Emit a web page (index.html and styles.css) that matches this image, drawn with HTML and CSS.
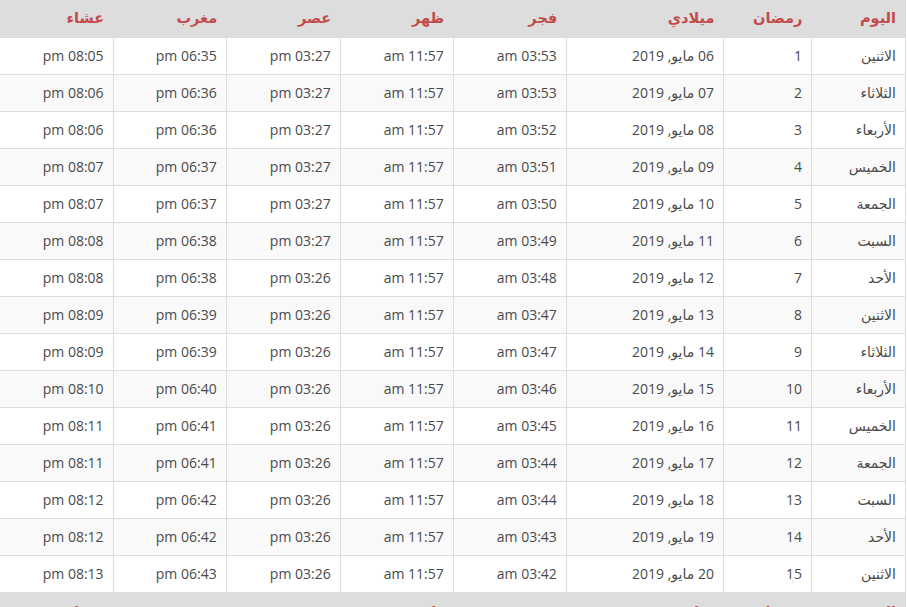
FILE: index.html
```html
<!DOCTYPE html>
<html lang="ar">
<head>
<meta charset="utf-8">
<title>إمساكية رمضان</title>
<link rel="stylesheet" href="styles.css">
</head>
<body>
<table class="times" dir="rtl">
<colgroup>
<col class="c-day"><col class="c-ram"><col class="c-date"><col class="c-t"><col class="c-t"><col class="c-t3"><col class="c-t"><col class="c-t">
</colgroup>
<thead>
<tr><th>اليوم</th><th>رمضان</th><th>ميلادي</th><th>فجر</th><th>ظهر</th><th>عصر</th><th>مغرب</th><th>عشاء</th></tr>
</thead>
<tbody>
<tr><td>الاثنين</td><td>1</td><td>06 مايو, 2019</td><td>03:53 am</td><td>11:57 am</td><td>03:27 pm</td><td>06:35 pm</td><td>08:05 pm</td></tr>
<tr><td>الثلاثاء</td><td>2</td><td>07 مايو, 2019</td><td>03:53 am</td><td>11:57 am</td><td>03:27 pm</td><td>06:36 pm</td><td>08:06 pm</td></tr>
<tr><td>الأربعاء</td><td>3</td><td>08 مايو, 2019</td><td>03:52 am</td><td>11:57 am</td><td>03:27 pm</td><td>06:36 pm</td><td>08:06 pm</td></tr>
<tr><td>الخميس</td><td>4</td><td>09 مايو, 2019</td><td>03:51 am</td><td>11:57 am</td><td>03:27 pm</td><td>06:37 pm</td><td>08:07 pm</td></tr>
<tr><td>الجمعة</td><td>5</td><td>10 مايو, 2019</td><td>03:50 am</td><td>11:57 am</td><td>03:27 pm</td><td>06:37 pm</td><td>08:07 pm</td></tr>
<tr><td>السبت</td><td>6</td><td>11 مايو, 2019</td><td>03:49 am</td><td>11:57 am</td><td>03:27 pm</td><td>06:38 pm</td><td>08:08 pm</td></tr>
<tr><td>الأحد</td><td>7</td><td>12 مايو, 2019</td><td>03:48 am</td><td>11:57 am</td><td>03:26 pm</td><td>06:38 pm</td><td>08:08 pm</td></tr>
<tr><td>الاثنين</td><td>8</td><td>13 مايو, 2019</td><td>03:47 am</td><td>11:57 am</td><td>03:26 pm</td><td>06:39 pm</td><td>08:09 pm</td></tr>
<tr><td>الثلاثاء</td><td>9</td><td>14 مايو, 2019</td><td>03:47 am</td><td>11:57 am</td><td>03:26 pm</td><td>06:39 pm</td><td>08:09 pm</td></tr>
<tr><td>الأربعاء</td><td>10</td><td>15 مايو, 2019</td><td>03:46 am</td><td>11:57 am</td><td>03:26 pm</td><td>06:40 pm</td><td>08:10 pm</td></tr>
<tr><td>الخميس</td><td>11</td><td>16 مايو, 2019</td><td>03:45 am</td><td>11:57 am</td><td>03:26 pm</td><td>06:41 pm</td><td>08:11 pm</td></tr>
<tr><td>الجمعة</td><td>12</td><td>17 مايو, 2019</td><td>03:44 am</td><td>11:57 am</td><td>03:26 pm</td><td>06:41 pm</td><td>08:11 pm</td></tr>
<tr><td>السبت</td><td>13</td><td>18 مايو, 2019</td><td>03:44 am</td><td>11:57 am</td><td>03:26 pm</td><td>06:42 pm</td><td>08:12 pm</td></tr>
<tr><td>الأحد</td><td>14</td><td>19 مايو, 2019</td><td>03:43 am</td><td>11:57 am</td><td>03:26 pm</td><td>06:42 pm</td><td>08:12 pm</td></tr>
<tr><td>الاثنين</td><td>15</td><td>20 مايو, 2019</td><td>03:42 am</td><td>11:57 am</td><td>03:26 pm</td><td>06:43 pm</td><td>08:13 pm</td></tr>
</tbody>
<tfoot>
<tr><th>اليوم</th><th>رمضان</th><th>ميلادي</th><th>فجر</th><th>ظهر</th><th>عصر</th><th>مغرب</th><th>عشاء</th></tr>
</tfoot>
</table>
</body>
</html>
```
FILE: styles.css
```css
html, body {
  margin: 0;
  padding: 0;
  background: #fff;
}
body {
  font-family: "Open Sans", "DejaVu Sans", sans-serif;
  font-size: 14px;
  color: #4a4a4a;
}
.times {
  width: 906px;
  border-collapse: collapse;
  table-layout: fixed;
  direction: rtl;
  border-right: 1px solid #dddddd;
}
.c-day { width: 94px; }
.c-ram { width: 88px; }
.c-date { width: 157px; }
.c-t { width: 113px; }
.c-t3 { width: 114px; }
.times th,
.times td {
  text-align: right;
  padding: 8px 9px;
  line-height: 20px;
  height: 20px;
  white-space: nowrap;
  overflow: hidden;
}
.times td {
  border: 1px solid #dddddd;
}
.times tr td:last-child {
  border-left: none;
}
.times thead th,
.times tfoot th {
  background: #dddddd;
  color: #c24a4a;
  font-weight: bold;
  font-size: 14.5px;
  border: none;
}
.times thead th {
  padding-top: 8px;
  padding-bottom: 9px;
}
.times tbody tr:nth-child(even) td {
  background: #f9f9f9;
}
.times tfoot th {
  padding-top: 9px;
}
```
